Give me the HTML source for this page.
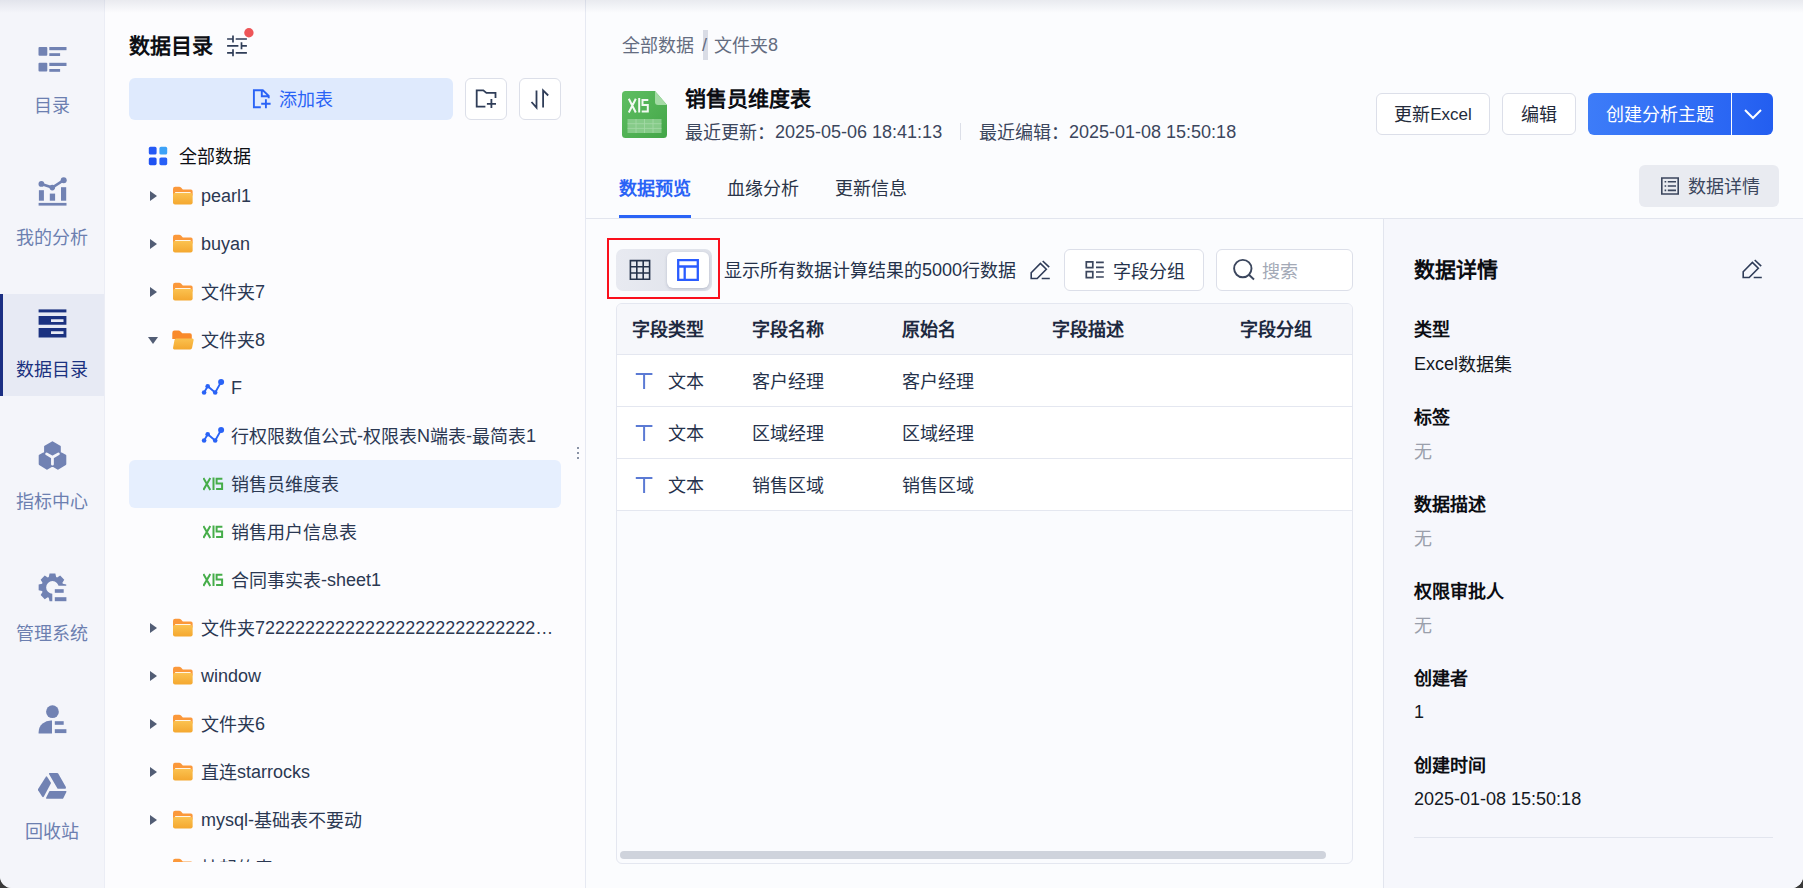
<!DOCTYPE html>
<html lang="zh-CN">
<head>
<meta charset="utf-8">
<title>数据目录</title>
<style>
*{box-sizing:border-box;margin:0;padding:0}
html,body{width:1803px;height:888px;overflow:hidden;background:#3a3a3a}
#wrap{position:absolute;left:0;top:0;width:1803px;height:888px;overflow:hidden;border-radius:0 0 12px 12px;background:#fbfcfe}
#topsh{position:absolute;left:0;top:0;width:1803px;height:13px;background:linear-gradient(to bottom,rgba(70,80,110,.10),rgba(70,80,110,0));pointer-events:none}
body{font-family:"Liberation Sans",sans-serif;font-size:18px;color:#232a3a;position:relative}
.abs{position:absolute}
.t{position:absolute;white-space:nowrap;line-height:24px;height:24px}
svg{display:block}
.c{position:relative;top:1px}
#nav .c{top:2px}
.bd .c{top:2px}
.bd1 .c{top:1px}
.big .c{top:0}
/* nav */
#nav{position:absolute;left:0;top:0;width:105px;height:888px;background:#f4f5fa;border-right:1px solid #ebedf5}
#nav .lab{position:absolute;left:0;width:104px;text-align:center;color:#6c7fb0;font-size:18px;line-height:24px;height:24px}
#nav .ic{position:absolute;left:36px;width:32px;height:32px}
#nav .act{position:absolute;left:0;top:294px;width:104px;height:102px;background:#e7eaf4}
#nav .act:before{content:"";position:absolute;left:0;top:0;width:3px;height:102px;background:#1b2f83}
/* tree */
#tree{position:absolute;left:105px;top:0;width:481px;height:888px;background:#fcfcfe;border-right:1px solid #e6e9f2}
.row{position:absolute;left:0;width:481px;height:48px}
.row .tx{position:absolute;top:12px;line-height:24px;white-space:nowrap;color:#2b3852}
.caret{position:absolute;left:45px;top:19px;width:0;height:0;border-left:7.5px solid #525d75;border-top:5px solid transparent;border-bottom:5px solid transparent}
.caret.open{left:43px;top:21px;border-top:7px solid #525d75;border-left:5.5px solid transparent;border-right:5.5px solid transparent;border-bottom:none}
.fold{position:absolute;left:68px;top:14px;width:20px;height:19px}
.xi{position:absolute;left:97px;top:13px;width:22px;height:22px}
/* main */
#main{position:absolute;left:586px;top:0;width:1217px;height:888px;background:#fbfcfe}
.btn{position:absolute;height:42px;border:1px solid #dcdfe9;border-radius:6px;background:#fff;text-align:center;line-height:40px;color:#232a3a;font-size:18px}
</style>
</head>
<body>
<div id="wrap">
<div id="nav">
  <div class="act"></div>
  <svg class="abs" style="left:0;top:0" width="104" height="888" viewBox="0 0 104 888">
    <g fill="#7182b3">
      <!-- 1 list -->
      <rect x="38.5" y="47" width="8.8" height="8.8" rx="1"/><rect x="49.3" y="47" width="17.2" height="3.2"/><rect x="49.3" y="53.2" width="10.8" height="2.8"/>
      <rect x="38.5" y="62.8" width="8.8" height="8.8" rx="1"/><rect x="49.3" y="62.8" width="17.2" height="3.2"/><rect x="49.3" y="69" width="10.8" height="2.8"/>
      <!-- 2 chart -->
      <rect x="38.9" y="190.2" width="5" height="10.5"/><rect x="49.8" y="193.6" width="5.3" height="7.1"/><rect x="61" y="187.2" width="5.2" height="13.5"/>
      <rect x="38.6" y="202.9" width="27.9" height="2.7"/>
      <circle cx="41.4" cy="183.9" r="2.9"/><circle cx="52.3" cy="187.6" r="2.8"/><circle cx="63.7" cy="180.2" r="3"/>
      <path d="M41.4 183.9L52.3 187.6L63.7 180.2" stroke="#7182b3" stroke-width="2.6" fill="none"/>
      <!-- 4 hex -->
      <path d="M52.45 442.300L59.800 446.500V452.500L65.300 455.700V464.100L57.900 468.700L52.45 465.300L47 468.700L39.700 464.100V455.700L45.100 452.500V446.500Z" stroke="#7182b3" stroke-width="2" stroke-linejoin="round"/>
      <!-- 5 gear -->
      <clipPath id="gc"><path d="M0 560H104V585.700H52.300V620H0z"/></clipPath><path d="M62.81 583.70L66.25 584.50L66.25 590.30L62.81 591.10A11.0 11.0 0 0 1 62.39 592.11L64.26 595.11L60.16 599.21L57.16 597.34A11.0 11.0 0 0 1 56.15 597.76L55.35 601.20L49.55 601.20L48.75 597.76A11.0 11.0 0 0 1 47.74 597.34L44.74 599.21L40.64 595.11L42.51 592.11A11.0 11.0 0 0 1 42.09 591.10L38.65 590.30L38.65 584.50L42.09 583.70A11.0 11.0 0 0 1 42.51 582.69L40.64 579.69L44.74 575.59L47.74 577.46A11.0 11.0 0 0 1 48.75 577.04L49.55 573.60L55.35 573.60L56.15 577.04A11.0 11.0 0 0 1 57.16 577.46L60.16 575.59L64.26 579.69L62.39 582.69A11.0 11.0 0 0 1 62.81 583.70zM58.75 587.40A6.3 6.3 0 1 0 46.15 587.40A6.3 6.3 0 1 0 58.75 587.40z" fill-rule="evenodd" clip-path="url(#gc)"/>
      <rect x="54.8" y="589.2" width="8.9" height="3.6"/><rect x="54.8" y="597.2" width="11.6" height="4"/>
      <!-- 6 user -->
      <circle cx="52.45" cy="711.7" r="6.4"/>
      <path d="M52 720.6v12.9H38.6v-1.5a12.5 11.6 0 0 1 13.4-11.4z"/>
      <rect x="54.8" y="721.2" width="8.9" height="3.6"/><rect x="54.8" y="729.2" width="11.6" height="3.9"/>
      <!-- 7 recycle -->
      <path d="M49.6 773h7.6q.7 0 1 .6l7.7 13.3q.6 1.8-1.2 1.9h-6.4q-.7 0-1-.6l-8.3-14.3q-.3-.9.6-.9z"/>
      <path d="M45.9 776.8q.6-.9 1.200 0l3.700 5.600q.3.600 0 1.200l-6.900 12.900q-.9 1.300-1.800 0l-4-6.300q-.3-.6 0-1.200z"/>
      <path d="M49.800 791.100h16q1 0 .6 1l-3.100 6.100q-.3.600-1 .6h-15.600q-1-.1-.6-1.100l3.100-6.100q.2-.5.600-.5z"/>
    </g>
    <path d="M46.600 453.900L52.450 457.300L58.400 453.900M52.450 457.300V464.200" stroke="#f4f5fa" stroke-width="2.800" fill="none" stroke-linecap="round"/>
    <!-- 3 active -->
    <g fill="#1b3280">
      <rect x="38.600" y="309.400" width="27.800" height="3"/>
      <path d="M38.600 316h27.800v8.800h-27.800zM51 319.200v2.800h12.500v-2.800z" fill-rule="evenodd"/>
      <path d="M38.600 328.100h27.800v9.400h-27.800zM51 331.200v2.900h12.500v-2.900z" fill-rule="evenodd"/>
    </g>
  </svg>
  <div class="lab" style="top:92px"><span class="c">目录</span></div>
  <div class="lab" style="top:224px"><span class="c">我的分析</span></div>
  <div class="lab" style="top:356px;color:#1b3280"><span class="c">数据目录</span></div>
  <div class="lab" style="top:488px"><span class="c">指标中心</span></div>
  <div class="lab" style="top:620px"><span class="c">管理系统</span></div>
  <div class="lab" style="top:818px"><span class="c">回收站</span></div>
</div>
<div id="tree">
  <div class="t big" style="left:24px;top:33px;font-size:21px;font-weight:bold;;color:#0d0f14;line-height:26px;height:26px"><span class="c">数据目录</span></div>
  <svg class="abs" style="left:120px;top:26px" width="32" height="34" viewBox="0 0 32 34"><path d="M2.100 13H8.400M10.700 13H21.900M8 9.500V16.500M2.100 19.800H13.400M16.500 19.800H21.900M16.500 16.300V23.300M2.100 26.800H8.400M10.700 26.800H21.900M8 23.300V30.300" stroke="#2f3d58" stroke-width="1.700" fill="none"/><circle cx="23.900" cy="6.800" r="4.700" fill="#ee5558"/></svg>
  <div class="abs" style="left:24px;top:78px;width:324px;height:42px;background:#dfeafd;border-radius:6px"></div>
  <svg class="abs" style="left:146px;top:88px" width="22" height="24" viewBox="0 0 22 24"><path d="M9.800 19.300H2.900V2.300H11.800L17.700 7.800V10.200M10.800 2.300V8.200H17.700M10.200 15.700H19.600M14.900 11.200V20.300" stroke="#2a63f6" stroke-width="1.900" fill="none"/></svg>
  <div class="t" style="left:174px;top:87px;color:#2a63f6"><span class="c">添加表</span></div>
  <div class="btn" style="left:360px;top:78px;width:42px"></div>
  <div class="btn" style="left:414px;top:78px;width:42px"></div>
  <svg class="abs" style="left:370px;top:88px" width="24" height="22" viewBox="0 0 24 22"><path d="M10.400 18.600H1.700V2.400H8.300L11.400 4.900H20.500V10M11.900 15.800H21M16.400 11V20.100" stroke="#2f3d58" stroke-width="1.800" fill="none"/></svg>
  <svg class="abs" style="left:424px;top:88px" width="22" height="22" viewBox="0 0 22 22"><path d="M7.500 2.400V19.600L2.500 14M14.100 19.600V2.400L19.200 7.500" stroke="#2f3d58" stroke-width="1.800" fill="none"/></svg>
  <div class="abs" style="left:0;top:136px;width:480px;height:726px;overflow:hidden"><div class="abs" style="left:0;top:-136px;width:480px;height:1000px">
  <svg class="abs" style="left:43px;top:146px" width="20" height="20" viewBox="0 0 20 20"><rect x=".8" y=".8" width="7.800" height="7.800" rx="1.600" fill="#2559f5"/><rect x="11.400" y=".8" width="7.800" height="7.800" rx="1.600" fill="#3da2f7"/><rect x=".8" y="11.400" width="7.800" height="7.800" rx="1.600" fill="#1f52f2"/><rect x="11.400" y="11.400" width="7.800" height="7.800" rx="1.600" fill="#2860f7"/></svg>
  <div class="t" style="left:74px;top:144px;color:#0d0f14"><span class="c">全部数据</span></div>
<div class="row" style="top:172px"><i class="caret"></i><svg class="fold" viewBox="0 0 22 20" preserveAspectRatio="none"><defs><linearGradient id="fg" x1="0" y1="0" x2="0" y2="1"><stop offset="0" stop-color="#fbc250"/><stop offset="1" stop-color="#f4a72f"/></linearGradient></defs><path d="M0 3.200Q0 .8 2.400 .8H6.800Q8 .8 8.800 1.700L10.800 3.700H19.700Q21.600 3.700 21.600 5.600V10H0z" fill="#fb983a"/><rect x="2.200" y="6.300" width="17.200" height="3" rx=".6" fill="#fff6e6"/><path d="M0 9.500Q0 7.400 2 7.400H19.600Q21.600 7.400 21.600 9.500V17.400Q21.600 19.600 19.400 19.600H2.200Q0 19.600 0 17.400z" fill="url(#fg)"/></svg><span class="tx" style="left:96px">pearl1</span></div>
<div class="row" style="top:220px"><i class="caret"></i><svg class="fold" viewBox="0 0 22 20" preserveAspectRatio="none"><path d="M0 3.200Q0 .8 2.400 .8H6.800Q8 .8 8.800 1.700L10.800 3.700H19.700Q21.600 3.700 21.600 5.600V10H0z" fill="#fb983a"/><rect x="2.200" y="6.300" width="17.200" height="3" rx=".6" fill="#fff6e6"/><path d="M0 9.500Q0 7.400 2 7.400H19.600Q21.600 7.400 21.600 9.500V17.400Q21.600 19.600 19.400 19.600H2.200Q0 19.600 0 17.400z" fill="url(#fg)"/></svg><span class="tx" style="left:96px">buyan</span></div>
<div class="row" style="top:268px"><i class="caret"></i><svg class="fold" viewBox="0 0 22 20" preserveAspectRatio="none"><path d="M0 3.200Q0 .8 2.400 .8H6.800Q8 .8 8.800 1.700L10.800 3.700H19.700Q21.600 3.700 21.600 5.600V10H0z" fill="#fb983a"/><rect x="2.200" y="6.300" width="17.200" height="3" rx=".6" fill="#fff6e6"/><path d="M0 9.500Q0 7.400 2 7.400H19.600Q21.600 7.400 21.600 9.500V17.400Q21.600 19.600 19.400 19.600H2.200Q0 19.600 0 17.400z" fill="url(#fg)"/></svg><span class="tx" style="left:96px"><span class="c">文件夹</span>7</span></div>
<div class="row" style="top:316px"><i class="caret open"></i><svg class="fold" style="left:67px;top:14px;width:22px;height:20px" viewBox="0 0 23 20" preserveAspectRatio="none"><path d="M.3 3Q.3 .6 2.700 .6H6.800Q8 .6 8.900 1.500L10.700 3.300H18.800Q20.700 3.300 20.700 5.200V9H.3z" fill="#f98a2b"/><path d="M4.300 8.400H21.300Q22.900 8.400 22.600 10L21 17.800Q20.700 19.400 19 19.400H2.400Q.8 19.400 1.100 17.800L2.600 9.900Q2.900 8.400 4.300 8.400z" fill="url(#fg)"/></svg><span class="tx" style="left:96px"><span class="c">文件夹</span>8</span></div>
<div class="row" style="top:364px"><svg class="xi" style="left:96px;top:8px;width:24px;height:24px" viewBox="0 0 24 24"><path d="M3.100 20.500L6.700 14.200L14.200 20.500L20.100 10" stroke="#2a63f6" stroke-width="1.800" fill="none"/><circle cx="3.100" cy="20.500" r="2.300" fill="#2a63f6"/><circle cx="6.700" cy="14.200" r="2.300" fill="#2a63f6"/><circle cx="14.200" cy="20.500" r="2.300" fill="#2a63f6"/><circle cx="20.100" cy="10" r="3" fill="#2a63f6"/></svg><span class="tx" style="left:126px">F</span></div>
<div class="row" style="top:412px"><svg class="xi" style="left:96px;top:8px;width:24px;height:24px" viewBox="0 0 24 24"><path d="M3.100 20.500L6.700 14.200L14.200 20.500L20.100 10" stroke="#2a63f6" stroke-width="1.800" fill="none"/><circle cx="3.100" cy="20.500" r="2.300" fill="#2a63f6"/><circle cx="6.700" cy="14.200" r="2.300" fill="#2a63f6"/><circle cx="14.200" cy="20.500" r="2.300" fill="#2a63f6"/><circle cx="20.100" cy="10" r="3" fill="#2a63f6"/></svg><span class="tx" style="left:126px"><span class="c">行权限数值公式</span>-<span class="c">权限表</span>N<span class="c">端表</span>-<span class="c">最简表</span>1</span></div>
<div class="abs" style="left:24px;top:460px;width:432px;height:48px;background:#e6effe;border-radius:6px"></div><div class="row" style="top:460px"><svg class="xi" style="left:98px;top:17px;width:21px;height:14px" viewBox="0 0 21 14"><path d="M.4 .9L7.300 12.900M7.300 .9L.4 12.900M10.500 .5V12.900M19.400 1.700H13.600V6.500H19.100V12H13.100" stroke="#46ad4a" stroke-width="2" fill="none"/></svg><span class="tx" style="left:126px"><span class="c">销售员维度表</span></span></div>
<div class="row" style="top:508px"><svg class="xi" style="left:98px;top:17px;width:21px;height:14px" viewBox="0 0 21 14"><path d="M.4 .9L7.300 12.900M7.300 .9L.4 12.900M10.500 .5V12.900M19.400 1.700H13.600V6.500H19.100V12H13.100" stroke="#46ad4a" stroke-width="2" fill="none"/></svg><span class="tx" style="left:126px"><span class="c">销售用户信息表</span></span></div>
<div class="row" style="top:556px"><svg class="xi" style="left:98px;top:17px;width:21px;height:14px" viewBox="0 0 21 14"><path d="M.4 .9L7.300 12.900M7.300 .9L.4 12.900M10.500 .5V12.900M19.400 1.700H13.600V6.500H19.100V12H13.100" stroke="#46ad4a" stroke-width="2" fill="none"/></svg><span class="tx" style="left:126px"><span class="c">合同事实表</span>-sheet1</span></div>
<div class="row" style="top:604px"><i class="caret"></i><svg class="fold" viewBox="0 0 22 20" preserveAspectRatio="none"><path d="M0 3.200Q0 .8 2.400 .8H6.800Q8 .8 8.800 1.700L10.800 3.700H19.700Q21.600 3.700 21.600 5.600V10H0z" fill="#fb983a"/><rect x="2.200" y="6.300" width="17.200" height="3" rx=".6" fill="#fff6e6"/><path d="M0 9.500Q0 7.400 2 7.400H19.600Q21.600 7.400 21.600 9.500V17.400Q21.600 19.600 19.400 19.600H2.200Q0 19.600 0 17.400z" fill="url(#fg)"/></svg><span class="tx" style="left:96px"><span class="c">文件夹</span>7222222222222222222222222222…</span></div>
<div class="row" style="top:652px"><i class="caret"></i><svg class="fold" viewBox="0 0 22 20" preserveAspectRatio="none"><path d="M0 3.200Q0 .8 2.400 .8H6.800Q8 .8 8.800 1.700L10.800 3.700H19.700Q21.600 3.700 21.600 5.600V10H0z" fill="#fb983a"/><rect x="2.200" y="6.300" width="17.200" height="3" rx=".6" fill="#fff6e6"/><path d="M0 9.500Q0 7.400 2 7.400H19.600Q21.600 7.400 21.600 9.500V17.400Q21.600 19.600 19.400 19.600H2.200Q0 19.600 0 17.400z" fill="url(#fg)"/></svg><span class="tx" style="left:96px">window</span></div>
<div class="row" style="top:700px"><i class="caret"></i><svg class="fold" viewBox="0 0 22 20" preserveAspectRatio="none"><path d="M0 3.200Q0 .8 2.400 .8H6.800Q8 .8 8.800 1.700L10.800 3.700H19.700Q21.600 3.700 21.600 5.600V10H0z" fill="#fb983a"/><rect x="2.200" y="6.300" width="17.200" height="3" rx=".6" fill="#fff6e6"/><path d="M0 9.500Q0 7.400 2 7.400H19.600Q21.600 7.400 21.600 9.500V17.400Q21.600 19.600 19.400 19.600H2.200Q0 19.600 0 17.400z" fill="url(#fg)"/></svg><span class="tx" style="left:96px"><span class="c">文件夹</span>6</span></div>
<div class="row" style="top:748px"><i class="caret"></i><svg class="fold" viewBox="0 0 22 20" preserveAspectRatio="none"><path d="M0 3.200Q0 .8 2.400 .8H6.800Q8 .8 8.800 1.700L10.800 3.700H19.700Q21.600 3.700 21.600 5.600V10H0z" fill="#fb983a"/><rect x="2.200" y="6.300" width="17.200" height="3" rx=".6" fill="#fff6e6"/><path d="M0 9.500Q0 7.400 2 7.400H19.600Q21.600 7.400 21.600 9.500V17.400Q21.600 19.600 19.400 19.600H2.200Q0 19.600 0 17.400z" fill="url(#fg)"/></svg><span class="tx" style="left:96px"><span class="c">直连</span>starrocks</span></div>
<div class="row" style="top:796px"><i class="caret"></i><svg class="fold" viewBox="0 0 22 20" preserveAspectRatio="none"><path d="M0 3.200Q0 .8 2.400 .8H6.800Q8 .8 8.800 1.700L10.800 3.700H19.700Q21.600 3.700 21.600 5.600V10H0z" fill="#fb983a"/><rect x="2.200" y="6.300" width="17.200" height="3" rx=".6" fill="#fff6e6"/><path d="M0 9.500Q0 7.400 2 7.400H19.600Q21.600 7.400 21.600 9.500V17.400Q21.600 19.600 19.400 19.600H2.200Q0 19.600 0 17.400z" fill="url(#fg)"/></svg><span class="tx" style="left:96px">mysql-<span class="c">基础表不要动</span></span></div>
<div class="row" style="top:844px"><i class="caret"></i><svg class="fold" viewBox="0 0 22 20" preserveAspectRatio="none"><path d="M0 3.200Q0 .8 2.400 .8H6.800Q8 .8 8.800 1.700L10.800 3.700H19.700Q21.600 3.700 21.600 5.600V10H0z" fill="#fb983a"/><rect x="2.200" y="6.300" width="17.200" height="3" rx=".6" fill="#fff6e6"/><path d="M0 9.500Q0 7.400 2 7.400H19.600Q21.600 7.400 21.600 9.500V17.400Q21.600 19.600 19.400 19.600H2.200Q0 19.600 0 17.400z" fill="url(#fg)"/></svg><span class="tx" style="left:96px"><span class="c">挂起的表</span></span></div>
  </div></div>
  <div class="abs" style="left:472px;top:447px;width:2px;height:2px;background:#8a93a6;box-shadow:0 5px 0 #8a93a6,0 10px 0 #8a93a6"></div>
</div>
<div id="main">
  <!-- breadcrumb -->
  <div class="t" style="left:36px;top:33px;color:#646c80"><span class="c">全部数据</span></div>
  <div class="abs" style="left:117px;top:30px;width:5px;height:30px;background:#d9dce5"></div>
  <div class="t" style="left:116px;top:33px;color:#646c80">/</div>
  <div class="t" style="left:128px;top:33px;color:#646c80"><span class="c">文件夹</span>8</div>
  <!-- file icon -->
  <svg class="abs" style="left:36px;top:91px" width="45" height="47" viewBox="0 0 45 47">
    <defs><linearGradient id="xg" x1="0" y1="0" x2="1" y2="1"><stop offset="0" stop-color="#5fbe62"/><stop offset="1" stop-color="#43a648"/></linearGradient></defs>
    <path d="M3.500 0H33L45 14V43.500Q45 47 41.500 47H3.500Q0 47 0 43.500V3.500Q0 0 3.500 0z" fill="url(#xg)"/>
    <path d="M33 0L45 14H36Q33 14 33 11z" fill="#a4dba5"/>
    <rect x="5.500" y="28" width="34" height="14" fill="#86cb89"/>
    <path d="M5.500 32.700H39.500M5.500 37.400H39.500M14 28V42M22.500 28V42M31 28V42" stroke="#a5d9a7" stroke-width=".8" fill="none"/>
    <path d="M6.800 7.700L13.800 21.500M13.800 7.700L6.800 21.500M17.200 7V21.500M26.300 9H20.500V14H25.800V20.400H19.700" stroke="#f2f9f2" stroke-width="2" fill="none"/>
  </svg>
  <div class="t big" style="left:99px;top:86px;font-size:21px;font-weight:bold;;color:#0b0d12;line-height:26px;height:26px"><span class="c">销售员维度表</span></div>
  <div class="t" style="left:99px;top:120px;color:#3b465d"><span class="c">最近更新：</span>2025-05-06 18:41:13</div>
  <div class="abs" style="left:374px;top:123px;width:1px;height:17px;background:#dcdfe8"></div>
  <div class="t" style="left:393px;top:120px;color:#3b465d"><span class="c">最近编辑：</span>2025-01-08 15:50:18</div>
  <!-- buttons -->
  <div class="btn" style="left:790px;top:93px;width:114px"><span class="c">更新</span><span style="font-size:17px">Excel</span></div>
  <div class="btn" style="left:916px;top:93px;width:74px"><span class="c">编辑</span></div>
  <div class="abs" style="left:1002px;top:93px;width:143px;height:42px;border-radius:6px 0 0 6px;background:linear-gradient(90deg,#3d7cf8,#2a66f3);color:#fff;text-align:center;line-height:42px"><span class="c">创建分析主题</span></div>
  <div class="abs" style="left:1146px;top:93px;width:41px;height:42px;border-radius:0 6px 6px 0;background:linear-gradient(90deg,#2a66f3,#235ef0)"></div>
  <svg class="abs" style="left:1157px;top:108px" width="20" height="12" viewBox="0 0 20 12"><path d="M2 2L10 10L18 2" stroke="#fff" stroke-width="2" fill="none"/></svg>
  <!-- tabs -->
  <div class="t bd1" style="left:33px;top:176px;color:#2a63f6;font-weight:bold"><span class="c">数据预览</span></div>
  <div class="t" style="left:141px;top:176px;color:#2a3448"><span class="c">血缘分析</span></div>
  <div class="t" style="left:249px;top:176px;color:#2a3448"><span class="c">更新信息</span></div>
  <div class="abs" style="left:0;top:218px;width:1217px;height:1px;background:#e2e5ee"></div>
  <div class="abs" style="left:33px;top:215px;width:72px;height:3px;background:#2a63f6"></div>
  <div class="abs" style="left:1053px;top:165px;width:140px;height:42px;border-radius:6px;background:#e9ebf1"></div>
  <svg class="abs" style="left:1074px;top:176px" width="20" height="20" viewBox="0 0 20 20"><path d="M1.800 2H18.200V18H1.800zM4.600 5.700H6.200M7.800 5.700H16M4.600 10H6.200M7.800 10H16M4.600 14.400H6.200M7.800 14.400H16" stroke="#3b465d" stroke-width="1.600" fill="none"/></svg>
  <div class="t" style="left:1102px;top:174px;color:#3b465d"><span class="c">数据详情</span></div>
  <!-- toolbar -->
  <div class="abs" style="left:21px;top:238px;width:113px;height:61px;border:2px solid #fa0f1c"></div>
  <div class="abs" style="left:30px;top:249px;width:96px;height:42px;border-radius:7px;background:linear-gradient(90deg,#e8eaf1,#dfe2ea)"></div>
  <div class="abs" style="left:81px;top:252px;width:42px;height:36px;border-radius:6px;background:#fff;box-shadow:0 1px 3px rgba(100,110,140,.35)"></div>
  <svg class="abs" style="left:42px;top:258px" width="24" height="24" viewBox="0 0 24 24"><path d="M2.400 2.600H21.600V21.200H2.400zM2.400 8.800H21.600M2.400 15H21.600M8.800 2.600V21.200M15.200 2.600V21.200" stroke="#25324b" stroke-width="1.600" fill="none"/></svg>
  <svg class="abs" style="left:90px;top:258px" width="24" height="24" viewBox="0 0 24 24"><path d="M2.200 2.200H21.800V21.800H2.200zM2.200 8.500H21.800M8.700 8.500V21.800" stroke="#2a5cff" stroke-width="2.300" fill="none"/></svg>
  <div class="t" style="left:138px;top:258px;color:#25324b"><span class="c">显示所有数据计算结果的</span>5000<span class="c">行数据</span></div>
  <svg class="abs" style="left:443px;top:259px" width="24" height="22" viewBox="0 0 24 22"><path d="M2.200 13.700L11.400 4.500L17.300 10.300L8.200 19.500H2.200zM13.700 2L20.200 8.200M12.700 19.500H20.800" stroke="#2f3c58" stroke-width="1.600" fill="none"/></svg>
  <div class="btn" style="left:478px;top:249px;width:140px"></div>
  <svg class="abs" style="left:498px;top:259px" width="22" height="22" viewBox="0 0 22 22"><path d="M2.300 2.800H8.800V8.600H2.300zM2.300 12.600H8.800V18.600H2.300zM12 3.400H19.800M12 8.400H19.800M12 13H19.800M12 18H19.800" stroke="#3b465d" stroke-width="1.700" fill="none"/></svg>
  <div class="t" style="left:527px;top:259px;color:#25324b"><span class="c">字段分组</span></div>
  <div class="btn" style="left:630px;top:249px;width:137px"></div>
  <svg class="abs" style="left:645px;top:258px" width="26" height="26" viewBox="0 0 26 26"><circle cx="11.800" cy="10.600" r="8.700" stroke="#3b465d" stroke-width="1.900" fill="none"/><path d="M17.900 16.800L23 21.500" stroke="#3b465d" stroke-width="1.900"/></svg>
  <div class="t" style="left:676px;top:259px;color:#a3a9b6"><span class="c">搜索</span></div>
  <!-- table -->
  <div class="abs" style="left:30px;top:303px;width:737px;height:561px;border:1px solid #e4e7f0;border-radius:6px;background:#fafbfe;overflow:hidden">
    <div class="abs" style="left:0;top:0;width:735px;height:51px;background:#f6f7fb;border-bottom:1px solid #e4e7f0"></div>
    <div class="abs" style="left:0;top:51px;width:735px;height:156px;background:#fff"></div>
    <div class="abs" style="left:0;top:102px;width:735px;height:1px;background:#e4e7f0"></div>
    <div class="abs" style="left:0;top:154px;width:735px;height:1px;background:#e4e7f0"></div>
    <div class="abs" style="left:0;top:206px;width:735px;height:1px;background:#e4e7f0"></div>
    <div class="abs" style="left:3px;top:547px;width:706px;height:8px;border-radius:4px;background:#cfd3dc"></div>
  </div>
  <div id="tb">
<div class="t bd1" style="left:46px;top:317px;font-weight:bold;color:#1d2940"><span class="c">字段类型</span></div>
<div class="t bd1" style="left:166px;top:317px;font-weight:bold;color:#1d2940"><span class="c">字段名称</span></div>
<div class="t bd1" style="left:316px;top:317px;font-weight:bold;color:#1d2940"><span class="c">原始名</span></div>
<div class="t bd1" style="left:466px;top:317px;font-weight:bold;color:#1d2940"><span class="c">字段描述</span></div>
<div class="t bd1" style="left:654px;top:317px;font-weight:bold;color:#1d2940"><span class="c">字段分组</span></div>
<svg class="abs" style="left:49px;top:372px" width="18" height="18" viewBox="0 0 18 18"><path d="M.8 2H17.400M9.100 2V17" stroke="#5b7ad4" stroke-width="2" fill="none"/></svg>
<div class="t" style="left:82px;top:369px;color:#25324b"><span class="c">文本</span></div>
<div class="t" style="left:166px;top:369px;color:#25324b"><span class="c">客户经理</span></div>
<div class="t" style="left:316px;top:369px;color:#25324b"><span class="c">客户经理</span></div>
<svg class="abs" style="left:49px;top:424px" width="18" height="18" viewBox="0 0 18 18"><path d="M.8 2H17.400M9.100 2V17" stroke="#5b7ad4" stroke-width="2" fill="none"/></svg>
<div class="t" style="left:82px;top:421px;color:#25324b"><span class="c">文本</span></div>
<div class="t" style="left:166px;top:421px;color:#25324b"><span class="c">区域经理</span></div>
<div class="t" style="left:316px;top:421px;color:#25324b"><span class="c">区域经理</span></div>
<svg class="abs" style="left:49px;top:476px" width="18" height="18" viewBox="0 0 18 18"><path d="M.8 2H17.400M9.100 2V17" stroke="#5b7ad4" stroke-width="2" fill="none"/></svg>
<div class="t" style="left:82px;top:473px;color:#25324b"><span class="c">文本</span></div>
<div class="t" style="left:166px;top:473px;color:#25324b"><span class="c">销售区域</span></div>
<div class="t" style="left:316px;top:473px;color:#25324b"><span class="c">销售区域</span></div>
</div>
  <!-- details -->
  <div class="abs" style="left:797px;top:219px;width:420px;height:669px;background:#f6f7fc;border-left:1px solid #e2e5ee"></div>
  <div id="dt">
<div class="t big" style="left:828px;top:257px;font-size:21px;font-weight:bold;;color:#0b0d12;line-height:26px;height:26px"><span class="c">数据详情</span></div>
<svg class="abs" style="left:1155px;top:258px" width="24" height="22" viewBox="0 0 24 22"><path d="M2.200 13.700L11.400 4.500L17.300 10.300L8.200 19.500H2.200zM13.700 2L20.200 8.200M12.700 19.500H20.800" stroke="#2f3c58" stroke-width="1.600" fill="none"/></svg>
<div class="t bd1" style="left:828px;top:317px;font-weight:bold;color:#0b0d12"><span class="c">类型</span></div>
<div class="t" style="left:828px;top:352px;color:#14181f">Excel<span class="c">数据集</span></div>
<div class="t bd" style="left:828px;top:404px;font-weight:bold;color:#0b0d12"><span class="c">标签</span></div>
<div class="t" style="left:828px;top:439px;color:#9a9fab"><span class="c">无</span></div>
<div class="t bd" style="left:828px;top:491px;font-weight:bold;color:#0b0d12"><span class="c">数据描述</span></div>
<div class="t" style="left:828px;top:526px;color:#9a9fab"><span class="c">无</span></div>
<div class="t bd" style="left:828px;top:578px;font-weight:bold;color:#0b0d12"><span class="c">权限审批人</span></div>
<div class="t" style="left:828px;top:613px;color:#9a9fab"><span class="c">无</span></div>
<div class="t bd" style="left:828px;top:665px;font-weight:bold;color:#0b0d12"><span class="c">创建者</span></div>
<div class="t" style="left:828px;top:700px;color:#14181f">1</div>
<div class="t bd" style="left:828px;top:752px;font-weight:bold;color:#0b0d12"><span class="c">创建时间</span></div>
<div class="t" style="left:828px;top:787px;color:#14181f">2025-01-08 15:50:18</div>
<div class="abs" style="left:828px;top:837px;width:359px;height:1px;background:#e2e5ee"></div>
</div>
</div>
<div id="topsh"></div>
</div>
</body>
</html>
